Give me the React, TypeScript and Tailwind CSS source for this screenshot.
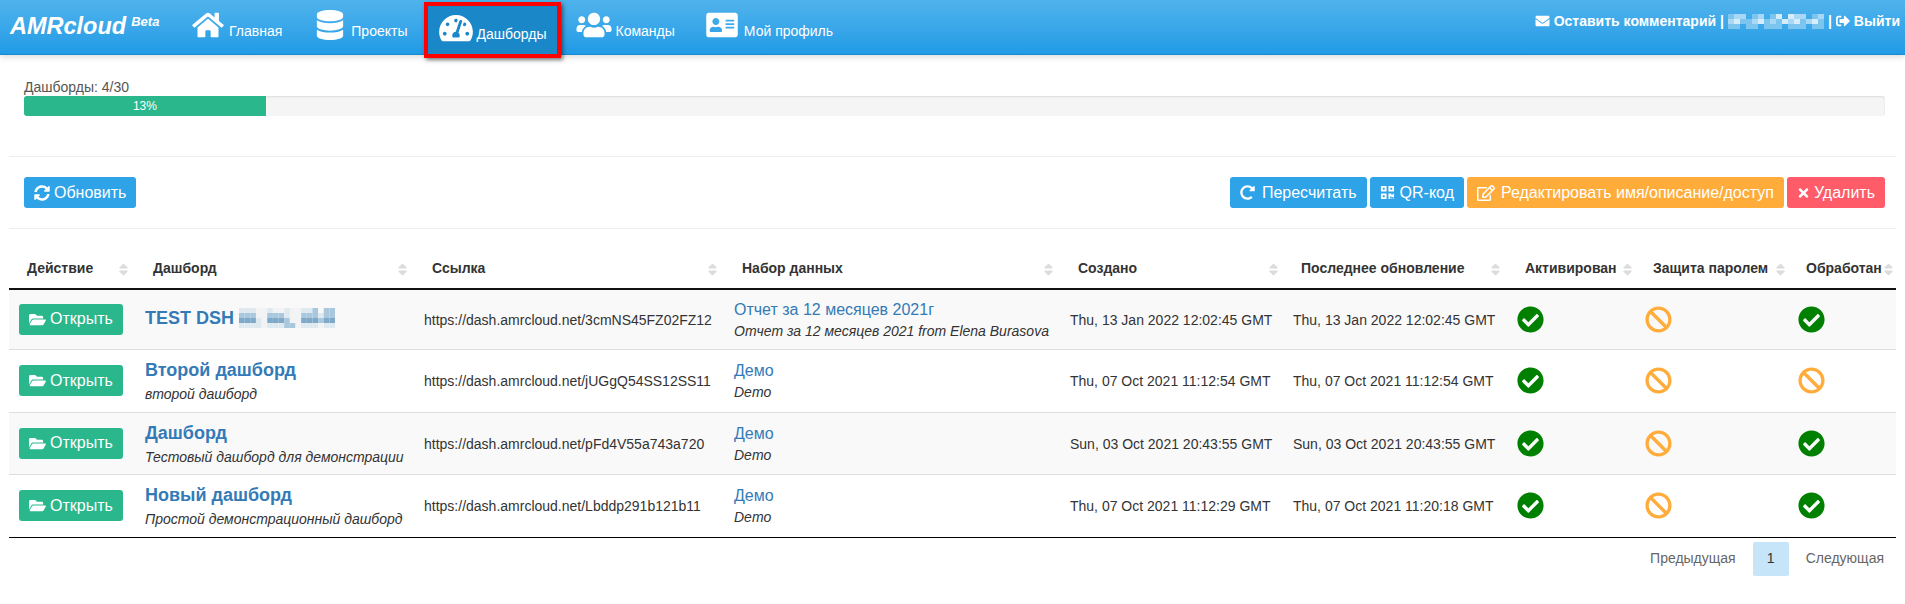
import type { ReactNode } from "react"
import {
  FaAddressCard,
  FaBan,
  FaCheckCircle,
  FaDatabase,
  FaEnvelope,
  FaFolderOpen,
  FaHome,
  FaQrcode,
  FaRedoAlt,
  FaRegEdit,
  FaSignOutAlt,
  FaSort,
  FaSyncAlt,
  FaTachometerAlt,
  FaTimes,
  FaUsers,
} from "react-icons/fa"

const rows = [
  {
    title: "TEST DSH",
    blurred: true,
    sub: "",
    link: "https://dash.amrcloud.net/3cmNS45FZ02FZ12",
    set: "Отчет за 12 месяцев 2021г",
    setSub: "Отчет за 12 месяцев 2021 from Elena Burasova",
    created: "Thu, 13 Jan 2022 12:02:45 GMT",
    updated: "Thu, 13 Jan 2022 12:02:45 GMT",
    done: true,
    height: "h-[60px] bg-[#f9f9f9]",
  },
  {
    title: "Второй дашборд",
    sub: "второй дашборд",
    link: "https://dash.amrcloud.net/jUGgQ54SS12SS11",
    set: "Демо",
    setSub: "Demo",
    created: "Thu, 07 Oct 2021 11:12:54 GMT",
    updated: "Thu, 07 Oct 2021 11:12:54 GMT",
    done: false,
    height: "h-[63px] bg-white",
  },
  {
    title: "Дашборд",
    sub: "Тестовый дашборд для демонстрации",
    link: "https://dash.amrcloud.net/pFd4V55a743a720",
    set: "Демо",
    setSub: "Demo",
    created: "Sun, 03 Oct 2021 20:43:55 GMT",
    updated: "Sun, 03 Oct 2021 20:43:55 GMT",
    done: true,
    height: "h-[62px] bg-[#f9f9f9]",
  },
  {
    title: "Новый дашборд",
    sub: "Простой демонстрационный дашборд",
    link: "https://dash.amrcloud.net/Lbddp291b121b11",
    set: "Демо",
    setSub: "Demo",
    created: "Thu, 07 Oct 2021 11:12:29 GMT",
    updated: "Thu, 07 Oct 2021 11:20:18 GMT",
    done: true,
    height: "h-[63px] bg-white",
  },
]

const headers = [
  { label: "Действие", width: "w-[126px]", sort: "right-[6px]" },
  { label: "Дашборд", width: "w-[279px]", sort: "right-[6px]" },
  { label: "Ссылка", width: "w-[310px]", sort: "right-[6px]" },
  { label: "Набор данных", width: "w-[336px]", sort: "right-[6px]" },
  { label: "Создано", width: "w-[223px]", sort: "right-[4px]" },
  { label: "Последнее обновление", width: "w-[224px]", sort: "right-[6px]" },
  { label: "Активирован", width: "w-[128px]", sort: "right-[2px]" },
  { label: "Защита паролем", width: "w-[153px]", sort: "right-[2px]" },
  { label: "Обработан", width: "w-[108px]", sort: "right-[2px]" },
]

const navItems = [
  { label: "Главная", box: "px-[15px]", icon: <FaHome className="mr-[5px] mb-[4px] h-[28px] w-[32px]" /> },
  { label: "Проекты", box: "ml-[2px] px-[15px]", icon: <FaDatabase className="mr-[7px] mb-[4px] h-[30px] w-[28px]" /> },
  {
    label: "Дашборды",
    box: "mt-[2px] h-[56px] border-[4px] border-[#f00] bg-[#1a87c9] px-[11px] shadow-[2px_2px_4px_rgba(0,0,0,0.5)]",
    icon: <FaTachometerAlt className="mr-[3px] mb-[4px] h-[30px] w-[34px]" />,
  },
  { label: "Команды", box: "pr-[15px] pl-[13px]", icon: <FaUsers className="mr-[3px] mb-[4px] h-[28px] w-[36px]" /> },
  { label: "Мой профиль", box: "px-[14px]", icon: <FaAddressCard className="mr-[6px] mb-[4px] h-[28px] w-[32px]" /> },
]

const titleMosaic = ["aaaddaddaddaab.bb", "bbbddbbbaddbbbabb", "cccadcccbddcccbcc", "aaaadaaabbdaaadaa"]
const nameMosaic = ["abb.ab.ac.cbb.ab", "bcaabcabacbcabca", "aa.aa.aaa.aaa.aa"]

function Btn({ color, icon, children }: { color: string; icon: ReactNode; children: ReactNode }) {
  return (
    <button className={`flex h-[31px] items-center gap-[4px] rounded-[3px] px-[10px] text-[16px] text-white ${color}`}>
      {icon}
      {children}
    </button>
  )
}

// stand-in for the pixelated parts of the screenshot
function Mosaic({ cells, cellW, palette }: { cells: string[]; cellW: number; palette: Record<string, string> }) {
  const cellH = 5
  return (
    <svg width={cells[0].length * cellW} height={cells.length * cellH} className="shrink-0">
      {cells.flatMap((line, y) =>
        line
          .split("")
          .map((c, x) =>
            palette[c] ? (
              <rect key={`${x}-${y}`} x={x * cellW} y={y * cellH} width={cellW} height={cellH} fill={palette[c]} />
            ) : null,
          ),
      )}
    </svg>
  )
}

export default function App() {
  return (
    <div className="min-h-[604px] bg-white font-['Liberation_Sans',Arial,sans-serif] text-[#333]">
      <nav className="flex h-[55px] items-start justify-between border-b border-[#1a8ad0] bg-gradient-to-b from-[#4fb3ec] to-[#1f9be6] shadow-[0_2px_6px_rgba(0,0,0,0.15)]">
        <div className="flex items-start gap-[2px]">
          <a className="mt-[12px] ml-[10px] flex w-[165px] items-start text-[23.5px] leading-[28px] font-bold text-white italic">
            AMRcloud
            <span className="ml-[5px] text-[13px] leading-[20px] font-bold">Beta</span>
          </a>
          {navItems.map((item) => (
            <a key={item.label} className={`flex h-[54px] items-center text-[14px] text-white ${item.box}`}>
              {item.icon}
              <span className="mt-[8px]">{item.label}</span>
            </a>
          ))}
        </div>
        <div className="mt-[11px] mr-[5px] flex items-center gap-[4px] text-[14px] leading-[20px] font-bold text-white">
          <FaEnvelope className="h-[14px] w-[15px]" />
          Оставить комментарий |
          <Mosaic cells={nameMosaic} cellW={6} palette={{ a: "#7cc5ef", b: "#a8d8f5", c: "#d5edfb" }} />
          |
          <FaSignOutAlt className="h-[14px] w-[14px]" />
          Выйти
        </div>
      </nav>

      <main className="px-[9px]">
        <div className="pt-[24px] pr-[11px] pl-[15px]">
          <div className="text-[14px] leading-[17px] text-[#555]">Дашборды: 4/30</div>
          <div className="flex h-[20px] w-full overflow-hidden rounded-[3px] bg-[#f5f5f5] shadow-[inset_0_1px_2px_rgba(0,0,0,0.1)]">
            <div className="flex w-[13%] items-center justify-center bg-[#2ab78c] text-[12px] text-white">13%</div>
          </div>
        </div>

        <hr className="mt-[40px] border-[#eee]" />
        <div className="flex h-[71px] items-center justify-between pr-[11px] pl-[15px]">
          <Btn color="bg-[#2ea3e8]" icon={<FaSyncAlt className="h-[16px] w-[16px]" />}>
            Обновить
          </Btn>
          <div className="flex gap-[3px]">
            <Btn color="bg-[#2ea3e8]" icon={<FaRedoAlt className="mr-[3px] h-[15px] w-[15px]" />}>
              Пересчитать
            </Btn>
            <Btn color="bg-[#2ea3e8]" icon={<FaQrcode className="mr-[1px] h-[15px] w-[15px]" />}>
              QR-код
            </Btn>
            <Btn color="bg-[#ffac3a]" icon={<FaRegEdit className="mr-[2px] h-[18px] w-[18px]" />}>
              Редактировать имя/описание/доступ
            </Btn>
            <Btn color="bg-[#ff5b69]" icon={<FaTimes className="h-[14px] w-[13px]" />}>
              Удалить
            </Btn>
          </div>
        </div>
        <hr className="border-[#eee]" />

        <table className="mt-[20px] w-full table-fixed border-b border-black text-[14px]">
          <thead>
            <tr className="h-[40px] border-b-2 border-[#111]">
              {headers.map((h) => (
                <th key={h.label} className={`relative px-[18px] text-left text-[14px] font-bold whitespace-nowrap text-[#333] ${h.width}`}>
                  {h.label}
                  <FaSort className={`absolute top-[13px] h-[15px] w-[11px] text-[#dcdcdc] ${h.sort}`} />
                </th>
              ))}
            </tr>
          </thead>
          <tbody>
            {rows.map((r) => (
              <tr key={r.link} className={`border-t border-[#ddd] first:border-t-0 ${r.height}`}>
                <td className="px-[10px]">
                  <Btn color="bg-[#2ab78c]" icon={<FaFolderOpen className="h-[15px] w-[17px]" />}>
                    Открыть
                  </Btn>
                </td>
                <td className="px-[10px] pt-[2px] whitespace-nowrap">
                  {r.blurred ? (
                    <div className="mb-[4px] flex items-center gap-[5px] text-[18px] leading-[22px] font-bold text-[#337ab7]">
                      {r.title}
                      <Mosaic cells={titleMosaic} cellW={5.65} palette={{ a: "#dfe9f0", b: "#a9c8de", c: "#7fa9c9", d: "#f1f3f4" }} />
                    </div>
                  ) : (
                    <div className="text-[18px] leading-[22px] font-bold text-[#337ab7]">{r.title}</div>
                  )}
                  {r.sub && <div className="mt-[3px] text-[14px] leading-[20px] italic">{r.sub}</div>}
                </td>
                <td className="px-[10px] pt-[2px] whitespace-nowrap">{r.link}</td>
                <td className="px-[10px] pt-[2px] whitespace-nowrap">
                  <div className="text-[16px] leading-[20px] text-[#337ab7]">{r.set}</div>
                  <div className="mt-[1px] text-[14px] leading-[20px] italic">{r.setSub}</div>
                </td>
                <td className="px-[10px] pt-[2px] whitespace-nowrap">{r.created}</td>
                <td className="px-[10px] pt-[2px] whitespace-nowrap">{r.updated}</td>
                <td className="px-[10px]">
                  <FaCheckCircle className="h-[27px] w-[27px] text-[#008000]" />
                </td>
                <td className="px-[10px]">
                  <FaBan className="h-[27px] w-[27px] text-[#ffac3a]" />
                </td>
                <td className="px-[10px]">
                  {r.done ? (
                    <FaCheckCircle className="h-[27px] w-[27px] text-[#008000]" />
                  ) : (
                    <FaBan className="h-[27px] w-[27px] text-[#ffac3a]" />
                  )}
                </td>
              </tr>
            ))}
          </tbody>
        </table>

        <div className="mt-[4px] -mr-[5px] flex items-center justify-end text-[14px] text-[#666]">
          <span className="px-[17px]">Предыдущая</span>
          <span className="flex h-[34px] w-[36px] items-center justify-center rounded-[2px] bg-[#c6e5f9] text-[#333]">1</span>
          <span className="px-[17px]">Следующая</span>
        </div>
      </main>
    </div>
  )
}
